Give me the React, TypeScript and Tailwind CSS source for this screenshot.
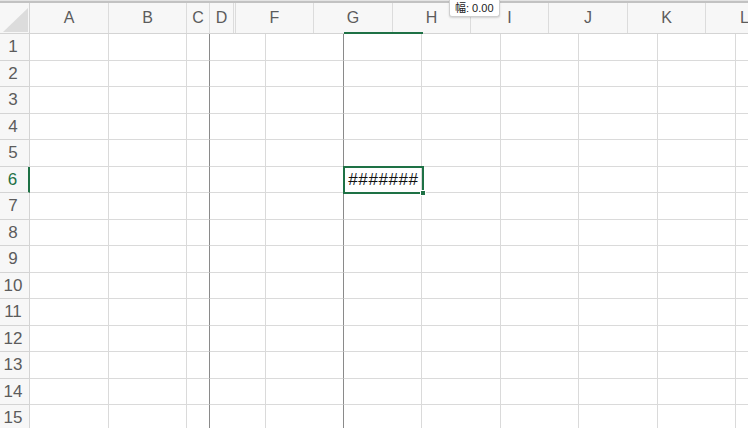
import React from "react";

// Header columns are drawn a little out of step with the body, as in the
// mid-drag screenshot: E is squeezed to nothing, D in the body is wide.
const headCols = [
  { label: "A", w: 79 },
  { label: "B", w: 78 },
  { label: "C", w: 23 },
  { label: "D", w: 24 },
  { label: "", w: 2 },
  { label: "F", w: 78 },
  { label: "G", w: 79 },
  { label: "H", w: 78 },
  { label: "I", w: 78 },
  { label: "J", w: 79 },
  { label: "K", w: 78 },
  { label: "L", w: 78 },
];

const bodyCols = [
  { key: "A", w: 79, dark: false },
  { key: "B", w: 78, dark: false },
  { key: "C", w: 23, dark: true },
  { key: "D", w: 56, dark: false },
  { key: "F", w: 78, dark: true },
  { key: "G", w: 78, dark: false },
  { key: "H", w: 79, dark: false },
  { key: "I", w: 78, dark: false },
  { key: "J", w: 79, dark: false },
  { key: "K", w: 78, dark: false },
  { key: "L", w: 78, dark: false },
];

const rows = Array.from({ length: 16 }, (_, i) => i + 1);

export default function App() {
  return (
    <div
      className="relative h-[428px] w-[748px] overflow-hidden bg-white"
      style={{ fontFamily: '"Liberation Sans", "Noto Sans CJK JP", sans-serif' }}
    >
      <div className="h-[1px] bg-[#e4e4e4]" />
      <div className="h-[2px] bg-[#c2c2c2]" />

      {/* column header */}
      <div className="flex h-[31px] border-b border-[#d4d4d4] bg-[#f7f7f7]">
        <div className="relative w-[30px] shrink-0 border-r border-[#d4d4d4]">
          <svg className="absolute left-[3px] top-[5px]" width="25" height="24" viewBox="0 0 25 24">
            <polygon points="0,24 25,24 25,0" fill="#dcdcdc" />
          </svg>
        </div>
        {headCols.map((c, i) => (
          <div
            key={i}
            className="flex shrink-0 items-center justify-center border-r border-[#dcdcdc] text-[16px] text-[#5c5c5c]"
            style={{ width: c.w }}
          >
            {c.label}
          </div>
        ))}
      </div>

      {/* body */}
      <div className="flex flex-col">
        {rows.map((r) => (
          <div key={r} className="flex h-[26.5px] shrink-0">
            <div
              className={
                "flex w-[30px] shrink-0 items-center justify-center border-b border-[#d4d4d4] bg-[#f7f7f7] pr-[3px] text-[17px] " +
                (r === 6 ? "border-r-2 border-r-[#1e7145] text-[#1e7145]" : "border-r border-r-[#d4d4d4] text-[#5c5c5c]")
              }
            >
              {r}
            </div>
            {bodyCols.map((c) => (
              <div
                key={c.key}
                className={
                  "relative shrink-0 border-b border-r border-b-[#dadada] " +
                  (c.dark ? "border-r-[#8a8a8a]" : "border-r-[#dadada]")
                }
                style={{ width: c.w }}
              >
                {r === 6 && c.key === "G" && (
                  <div className="absolute -left-[1px] -top-[1px] z-10 flex h-[28px] w-[81px] items-center justify-center border-2 border-[#1e7145] text-[17px] tracking-[0.6px] text-[#111]">
                    #######
                    <div className="absolute -bottom-[4px] -right-[4px] h-[6px] w-[6px] border border-white bg-[#1e7145]" />
                  </div>
                )}
              </div>
            ))}
          </div>
        ))}
      </div>

      {/* selected column marker */}
      <div className="absolute left-[344px] top-[32px] h-[2px] w-[79px] bg-[#1e7145]" />

      {/* resize tooltip */}
      <div className="absolute left-[449px] top-0 z-20 flex h-[17px] items-center rounded-b-[3px] border border-t-0 border-[#cfcfcf] bg-white px-[5px] text-[11px] text-[#222] shadow-[0_1px_2px_rgba(0,0,0,0.15)]">
        幅: 0.00
      </div>
    </div>
  );
}
